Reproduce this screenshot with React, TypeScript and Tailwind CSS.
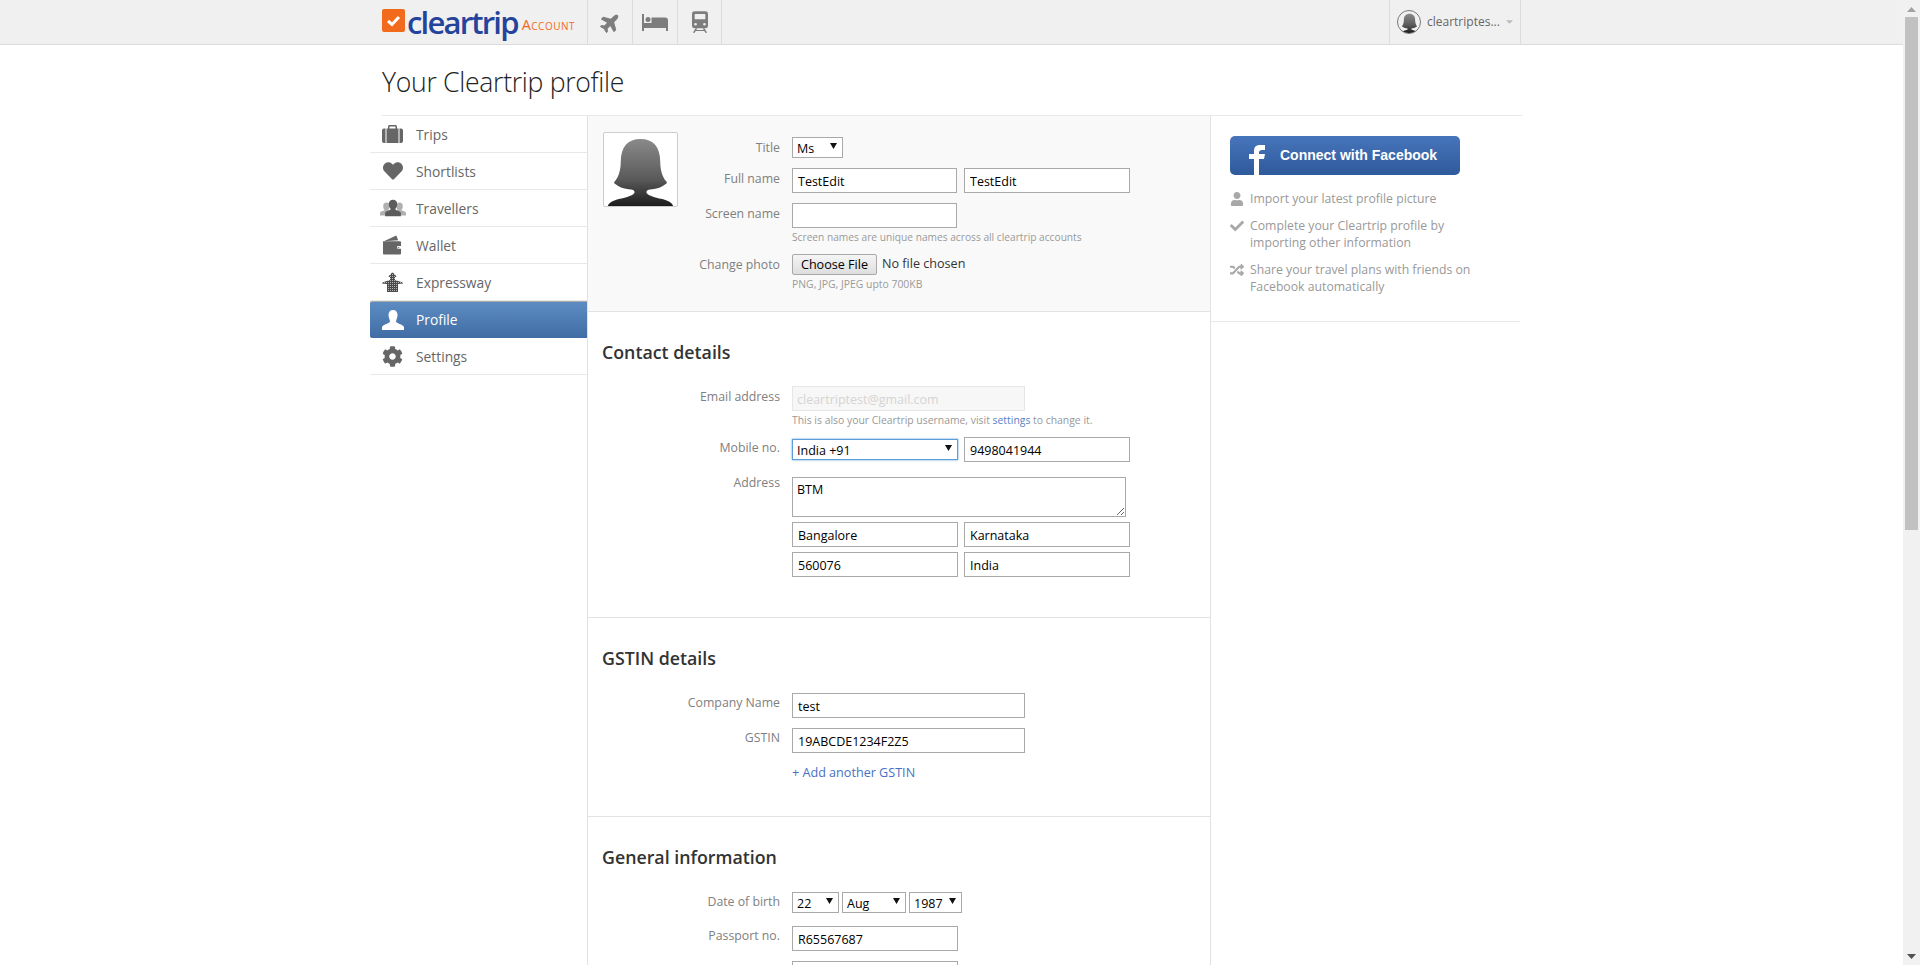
import { ReactNode } from 'react';
import { FaCheck, FaCog, FaHeart, FaPlane, FaRandom, FaUser } from 'react-icons/fa';

const inputClass =
  'h-[25px] border border-[#a9a9a9] bg-white px-[5px] pt-[2px] text-[12.5px] text-black outline-none';

function FemaleAvatar({ className }: { className: string }) {
  return (
    <svg viewBox="0 0 74 74" className={className}>
      <defs>
        <linearGradient id="avatarFill" x1="0" y1="0" x2="0" y2="1">
          <stop offset="0" stopColor="#8a8a8a" />
          <stop offset="0.6" stopColor="#5a5a5a" />
          <stop offset="1" stopColor="#1c1c1c" />
        </linearGradient>
      </defs>
      <path
        fill="url(#avatarFill)"
        d="M37 6c-13 0-20 8-20 23 0 10-3 17-6 20-1 1-1 2 0 2.500 4 3 8 5 14 5.500 4 0 6 1 6 3 0 3-8 5-16 7-7 2-10 4-11 7h66c-1-3-4-5-11-7-8-2-16-4-16-7 0-2 2-3 6-3 6-.5 10-2.500 14-5.500 1-.5 1-1.500 0-2.500-3-3-6-10-6-20C57 14 50 6 37 6z"
      />
    </svg>
  );
}

function Triangle() {
  return (
    <svg viewBox="0 0 8 8" className="pointer-events-none absolute top-[5px] right-[6px] h-[7px] w-[7px]">
      <path d="M0 1h8L4 8z" fill="#111" />
    </svg>
  );
}

function Select({ value, w, focus }: { value: string; w: string; focus?: boolean }) {
  return (
    <div className={`relative h-[21px] ${w}`}>
      <div
        className={`h-[21px] w-full bg-white pl-1 text-[12.5px] leading-[21px] text-black ${
          focus ? 'border border-[#5b9dd9] shadow-[0_0_2px_#5b9dd9]' : 'border border-[#a9a9a9]'
        }`}
      >
        {value}
      </div>
      <Triangle />
    </div>
  );
}

function Row({ label, pt = 'pt-[2px]', children }: { label: string; pt?: string; children: ReactNode }) {
  return (
    <div className="flex items-start gap-3">
      <div className={`w-[192px] shrink-0 text-right text-[12.3px] leading-[18px] text-[#808080] ${pt}`}>{label}</div>
      <div>{children}</div>
    </div>
  );
}

function TrainIcon() {
  return (
    <svg viewBox="0 0 18 24" className="h-[22px] w-[16px]" fill="#7d7d7d">
      <path d="M3 0h12a3 3 0 0 1 3 3v13a3 3 0 0 1-3 3H3a3 3 0 0 1-3-3V3a3 3 0 0 1 3-3zm0 3v6h12V3zm1 10a1.500 1.500 0 1 0 0 3 1.500 1.500 0 0 0 0-3zm10 0a1.500 1.500 0 1 0 0 3 1.500 1.500 0 0 0 0-3z" fillRule="evenodd" />
      <path d="M4 19h2l-3 5H1zM12 19h2l3 5h-2zM4 21h10v1H4z" />
    </svg>
  );
}

function BedIcon() {
  return (
    <svg viewBox="0 0 26 17" className="h-[17px] w-[26px]" fill="#7d7d7d">
      <path d="M0 0h2v9h24v8h-2v-3H2v3H0z" />
      <circle cx="6" cy="5.500" r="2.500" />
      <path d="M9.500 3.500H23a3 3 0 0 1 3 3V9H9.500z" />
    </svg>
  );
}

function SuitcaseIcon() {
  return (
    <svg viewBox="0 0 21 18" className="h-[18px] w-[21px]" fill="#666">
      <path d="M6 4V1.500C6 .7 6.700 0 7.500 0h6c.8 0 1.500.7 1.500 1.500V4h-1.500V1.500h-6V4z" />
      <path d="M4.500 3.500h12V18h-12z" />
      <path d="M2 3.500h1.500V18H2a2 2 0 0 1-2-2V5.500a2 2 0 0 1 2-2zM17.500 3.500H19a2 2 0 0 1 2 2V16a2 2 0 0 1-2 2h-1.500z" />
    </svg>
  );
}

function TravellersIcon() {
  return (
    <svg viewBox="0 0 28 18" className="h-[18px] w-[26px]">
      <path fill="#b0b0b0" d="M7 3a3.500 3.500 0 0 1 3.500 4c0 2-1 3-1.500 4 0 1 2 1.500 3 2.500V17H0v-3c1-1.500 5-2 5-3-1-1-1.500-2-1.500-4A3.500 3.500 0 0 1 7 3zM21 3a3.500 3.500 0 0 1 3.500 4c0 2-.5 3-1.500 4 0 1 4 1.500 5 3v3H16v-3.500c1-1 3-1.500 3-2.500-.5-1-1.500-2-1.500-4A3.500 3.500 0 0 1 21 3z" />
      <path fill="#5c5c5c" d="M14 0a4.500 4.500 0 0 1 4.500 5c0 2.500-1 4-2 5 0 1.500 5 2 6 4v4H5.500v-4c1-2 6-2.500 6-4-1-1-2-2.500-2-5A4.500 4.500 0 0 1 14 0z" />
    </svg>
  );
}

function WalletIcon() {
  return (
    <svg viewBox="0 0 20 20" className="h-[20px] w-[19px]" fill="#666">
      <path d="M1 6 14 0l2 5z" />
      <path fillRule="evenodd" d="M0 6h18a1 1 0 0 1 1 1v12a1 1 0 0 1-1 1H1a1 1 0 0 1-1-1zm15 5v3h4v-3zm1.500 1a.7.7 0 1 1 0 1.400.7.7 0 0 1 0-1.400z" />
    </svg>
  );
}

function ExpresswayIcon() {
  return (
    <svg viewBox="0 0 21 20" className="h-[20px] w-[21px]">
      <defs>
        <pattern id="dots" width="2" height="2" patternUnits="userSpaceOnUse">
          <rect width="2" height="2" fill="#4a4a4a" />
          <rect width="1" height="1" fill="#b5b5b5" />
        </pattern>
      </defs>
      <path fill="url(#dots)" d="M10.500 0 15 5h-2v3l8 2.500v1l-5 .5v8H5v-8l-5-.5v-1L8 8V5H6z" />
    </svg>
  );
}

function ProfileIcon() {
  return (
    <svg viewBox="0 0 22 20" className="h-[20px] w-[22px]" fill="#fff">
      <path d="M11 0c3 0 4.500 2 4.500 5S14 10 14 11.500s7 3 8 5.500v3H0v-3c1-2.500 8-4 8-5.500S6.500 8 6.500 5 8 0 11 0z" />
    </svg>
  );
}

const navItems: { label: string; icon: ReactNode; active?: boolean }[] = [
  { label: 'Trips', icon: <SuitcaseIcon /> },
  { label: 'Shortlists', icon: <FaHeart className="h-[20px] w-[20px] text-[#666]" /> },
  { label: 'Travellers', icon: <TravellersIcon /> },
  { label: 'Wallet', icon: <WalletIcon /> },
  { label: 'Expressway', icon: <ExpresswayIcon /> },
  { label: 'Profile', icon: <ProfileIcon />, active: true },
  { label: 'Settings', icon: <FaCog className="h-[21px] w-[21px] text-[#666]" /> },
];

function Sidebar() {
  return (
    <div className="w-[217px] shrink-0">
      {navItems.map((item) => (
        <div
          key={item.label}
          className={`flex h-[37px] items-center ${
            item.active
              ? 'rounded-l-[2px] border-t border-[#aaa] bg-gradient-to-b from-[#5d8cc2] to-[#3f6da4] text-white'
              : 'border-b border-[#e8e8e8] text-[#666]'
          }`}
        >
          <div className="flex w-[45px] shrink-0 justify-center">{item.icon}</div>
          <span className={`pl-px text-[13.8px] ${item.active ? 'pt-px' : 'pt-[2px]'}`}>{item.label}</span>
        </div>
      ))}
    </div>
  );
}

function PhotoPanel() {
  return (
    <div className="flex h-[196px] items-start border-b border-[#e2e2e2] bg-[#f9f9f9] pt-[16px] pl-[15px]">
      <div className="h-[75px] w-[75px] shrink-0 rounded-[2px] border border-[#ccc] bg-white">
        <FemaleAvatar className="h-[73px] w-[73px]" />
      </div>
      <div className="-ml-[90px] flex flex-col pt-[5px]">
        <Row label="Title">
          <Select value="Ms" w="w-[51px]" />
        </Row>
        <div className="mt-[10px]">
          <Row label="Full name">
            <div className="flex gap-[7px]">
              <input defaultValue="TestEdit" className={`${inputClass} w-[165px]`} />
              <input defaultValue="TestEdit" className={`${inputClass} w-[166px]`} />
            </div>
          </Row>
        </div>
        <div className="mt-[10px]">
          <Row label="Screen name">
            <input className={`${inputClass} block w-[165px]`} />
            <p className="text-[10.2px] leading-[18px] text-[#999]">
              Screen names are unique names across all cleartrip accounts
            </p>
          </Row>
        </div>
        <div className="mt-[8px]">
          <Row label="Change photo">
            <div className="flex h-[21px] items-center gap-[5px] text-[12.6px] text-[#333]">
              <button className="h-[21px] w-[85px] rounded-[2px] border border-[#a9a9a9] bg-gradient-to-b from-[#f5f5f5] to-[#dedede] text-[12.6px] leading-[18px] text-black">
                Choose File
              </button>
              <span>No file chosen</span>
            </div>
            <p className="text-[10.4px] leading-[18px] text-[#999]">PNG, JPG, JPEG upto 700KB</p>
          </Row>
        </div>
      </div>
    </div>
  );
}

function ContactSection() {
  return (
    <div className="h-[306px] border-b border-[#e2e2e2] pt-[28px]">
      <h2 className="pl-[14px] text-[17.8px] leading-[24px] font-semibold text-[#333]">Contact details</h2>
      <div className="mt-[22px] flex flex-col">
        <Row label="Email address">
          <input
            disabled
            defaultValue="cleartriptest@gmail.com"
            className="block h-[25px] w-[233px] border border-[#e6e6e6] bg-[#f7f7f7] px-[4px] pt-[2px] text-[12.5px] text-[#d4d4d4]"
          />
          <p className="text-[10.4px] leading-[18px] text-[#999]">
            This is also your Cleartrip username, visit <span className="text-[#5a7fc4]">settings</span> to change it.
          </p>
        </Row>
        <div className="mt-[8px]">
          <Row label="Mobile no." pt="pt-[2px]">
            <div className="flex items-center gap-[6px]">
              <Select value="India +91" w="w-[166px]" focus />
              <input defaultValue="9498041944" className={`${inputClass} w-[166px]`} />
            </div>
          </Row>
        </div>
        <div className="mt-[15px]">
          <Row label="Address" pt="-mt-[3px]">
            <textarea
              defaultValue="BTM"
              className="block h-[40px] w-[334px] border border-[#a9a9a9] bg-white px-1 pt-[3px] text-[12.5px] leading-[18px] text-black outline-none"
            />
            <div className="mt-[5px] flex gap-[6px]">
              <input defaultValue="Bangalore" className={`${inputClass} w-[166px]`} />
              <input defaultValue="Karnataka" className={`${inputClass} w-[166px]`} />
            </div>
            <div className="mt-[5px] flex gap-[6px]">
              <input defaultValue="560076" className={`${inputClass} w-[166px]`} />
              <input defaultValue="India" className={`${inputClass} w-[166px]`} />
            </div>
          </Row>
        </div>
      </div>
    </div>
  );
}

function GstinSection() {
  return (
    <div className="h-[199px] border-b border-[#e2e2e2] pt-[28px]">
      <h2 className="pl-[14px] text-[17.8px] leading-[24px] font-semibold text-[#333]">GSTIN details</h2>
      <div className="mt-[23px] flex flex-col gap-[10px]">
        <Row label="Company Name" pt="pt-px">
          <input defaultValue="test" className={`${inputClass} block w-[233px]`} />
        </Row>
        <Row label="GSTIN" pt="pt-px">
          <input defaultValue="19ABCDE1234F2Z5" className={`${inputClass} block w-[233px]`} />
          <p className="mt-[11px] text-[12.6px] leading-[18px] text-[#4a6fc4]">+ Add another GSTIN</p>
        </Row>
      </div>
    </div>
  );
}

function GeneralSection() {
  return (
    <div className="pt-[28px]">
      <h2 className="pl-[14px] text-[17.8px] leading-[24px] font-semibold text-[#333]">General information</h2>
      <div className="mt-[23px] flex flex-col">
        <Row label="Date of birth" pt="pt-px">
          <div className="flex gap-[3px]">
            <Select value="22" w="w-[47px]" />
            <Select value="Aug" w="w-[64px]" />
            <Select value="1987" w="w-[53px]" />
          </div>
        </Row>
        <div className="mt-[13px]">
          <Row label="Passport no." pt="pt-px">
            <input defaultValue="R65567687" className={`${inputClass} block w-[166px]`} />
            <input className={`${inputClass} mt-[10px] block w-[166px]`} />
          </Row>
        </div>
      </div>
    </div>
  );
}

function FacebookPanel() {
  return (
    <div className="w-[309px] shrink-0">
      <div className="h-[206px] border-b border-[#e8e8e8] pt-[20px] pl-[19px]">
        <div className="relative flex h-[39px] w-[230px] items-center overflow-hidden rounded-[5px] bg-gradient-to-b from-[#4775bb] to-[#2f5a9c] pl-[50px] font-['Liberation_Sans',sans-serif] text-[14px] font-bold text-white">
          <svg viewBox="0 0 16 30" className="absolute top-[9px] left-[19px] h-[30px] w-[16px]" fill="#fff">
            <path d="M5 30V14H0V9h5V6c0-4 2-6 6-6h5v5h-3c-2 0-3 1-3 2.500V9h6l-1 5h-5v16z" />
          </svg>
          Connect with Facebook
        </div>
        <ul className="mt-[15px] flex flex-col gap-[10px] text-[12.25px] leading-[17px] text-[#999]">
          <li className="flex gap-[6px]">
            <FaUser className="mt-[2px] h-[14px] w-[14px] shrink-0 text-[#a8a8a8]" />
            <span>Import your latest profile picture</span>
          </li>
          <li className="flex gap-[6px]">
            <FaCheck className="mt-[2px] h-[14px] w-[14px] shrink-0 text-[#a8a8a8]" />
            <span className="w-[230px]">Complete your Cleartrip profile by importing other information</span>
          </li>
          <li className="flex gap-[6px]">
            <FaRandom className="mt-[2px] h-[14px] w-[14px] shrink-0 text-[#a8a8a8]" />
            <span className="w-[240px]">Share your travel plans with friends on Facebook automatically</span>
          </li>
        </ul>
      </div>
    </div>
  );
}

function Header() {
  return (
    <div className="h-[45px] border-b border-[#dcdcdc] bg-[#f0f0f0]">
      <div className="ml-[382px] flex h-[44px] w-[1139px] items-stretch">
        <div className="flex w-[205px] items-center">
          <svg viewBox="0 0 23 23" className="mb-[4px] h-[23px] w-[23px] shrink-0">
            <rect width="23" height="23" rx="2" fill="#f26a1b" />
            <path d="M6 12l4 3.500L17 8" fill="none" stroke="#fff" strokeWidth="3" />
          </svg>
          <span className="ml-[2px] text-[31px] leading-[36px] font-semibold tracking-[-1.8px] text-[#24439b]">cleartrip</span>
          <span className="mt-[6px] ml-[4px] text-[14.5px] tracking-[0.5px] text-[#f26a1b] [font-variant:small-caps]">Account</span>
        </div>
        <div className="flex w-[45px] items-center justify-center border-l border-[#dcdcdc]">
          <FaPlane className="h-[21px] w-[21px] -rotate-45 text-[#7d7d7d]" />
        </div>
        <div className="flex w-[45px] items-center justify-center border-l border-[#dcdcdc]">
          <BedIcon />
        </div>
        <div className="flex w-[45px] items-center justify-center border-x border-[#dcdcdc]">
          <TrainIcon />
        </div>
        <div className="ml-auto flex w-[132px] items-center gap-[6px] border-x border-[#dcdcdc] pl-[7px]">
          <div className="flex h-[24px] w-[24px] items-end justify-center overflow-hidden rounded-full border border-[#777] bg-[#f0f0f0]">
            <FemaleAvatar className="h-[21px] w-[21px]" />
          </div>
          <span className="text-[12px] text-[#666]">cleartriptes...</span>
          <svg viewBox="0 0 8 4" className="h-[4px] w-[7px]">
            <path d="M0 0h8L4 4z" fill="#bbb" />
          </svg>
        </div>
      </div>
    </div>
  );
}

function Scrollbar() {
  return (
    <div className="flex h-full w-[17px] shrink-0 flex-col items-center bg-[#f1f1f1]">
      <svg viewBox="0 0 9 5" className="mt-[7px] mb-[5px] h-[5px] w-[9px]">
        <path d="M4.500 0 9 5H0z" fill="#a3a3a3" />
      </svg>
      <div className="h-[513px] w-[13px] bg-[#c1c1c1]" />
      <svg viewBox="0 0 9 5" className="mt-auto mb-[6px] h-[5px] w-[9px]">
        <path d="M0 0h9L4.500 5z" fill="#505050" />
      </svg>
    </div>
  );
}

export default function App() {
  return (
    <div className="flex h-[965px] overflow-hidden bg-white font-['Open_Sans',sans-serif]">
      <div className="flex-1 overflow-hidden">
        <Header />
        <div className="ml-[370px] w-[1152px]">
          <h1 className="ml-[12px] flex h-[70px] items-center pt-[6px] text-[26.6px] font-light tracking-[-0.3px] text-[#222]">
            Your Cleartrip profile
          </h1>
          <div className="ml-[12px] border-b border-[#e8e8e8]" />
          <div className="flex">
            <Sidebar />
            <div className="w-[624px] shrink-0 border-x border-[#e2e2e2]">
              <PhotoPanel />
              <ContactSection />
              <GstinSection />
              <GeneralSection />
            </div>
            <FacebookPanel />
          </div>
        </div>
      </div>
      <Scrollbar />
    </div>
  );
}
